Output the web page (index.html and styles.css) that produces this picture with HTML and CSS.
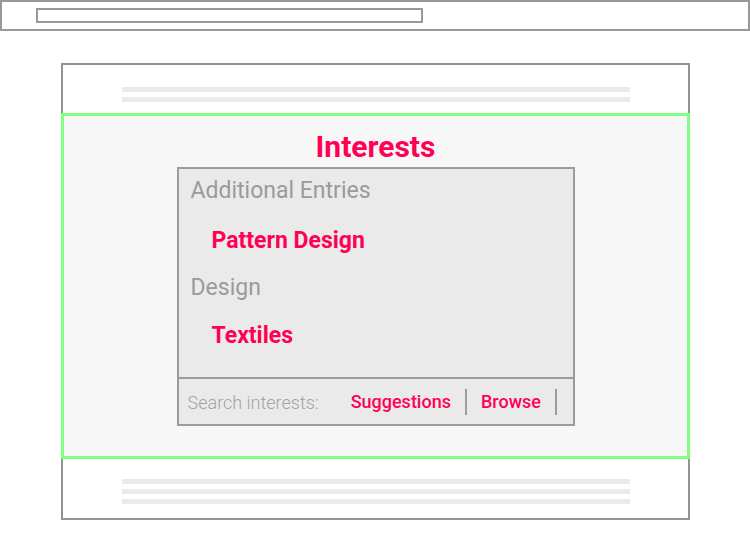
FILE: index.html
```html
<!DOCTYPE html>
<html lang="en">
<head>
<meta charset="utf-8">
<title>Interests</title>
<link rel="stylesheet" href="styles.css">
</head>
<body>
  <header class="topbar">
    <div class="topbar-field"></div>
  </header>

  <main class="page">
    <section class="page-head">
      <div class="placeholder-line"></div>
      <div class="placeholder-line"></div>
    </section>

    <section class="focus">
      <h1 class="focus-title">Interests</h1>
      <div class="panel">
        <ul class="entries">
          <li class="entry entry-group">Additional Entries</li>
          <li class="entry entry-item">Pattern Design</li>
          <li class="entry entry-group">Design</li>
          <li class="entry entry-item">Textiles</li>
        </ul>
        <div class="panel-footer">
          <span class="search-label">Search interests:</span>
          <a class="search-link">Suggestions</a>
          <a class="search-link">Browse</a>
        </div>
      </div>
    </section>

    <section class="page-foot">
      <div class="placeholder-line"></div>
      <div class="placeholder-line"></div>
      <div class="placeholder-line"></div>
    </section>
  </main>
</body>
</html>
```

FILE: styles.css
```css
* {
  box-sizing: border-box;
}

html, body {
  margin: 0;
  padding: 0;
  background: #ffffff;
}

body {
  width: 750px;
  height: 550px;
  overflow: hidden;
  font-family: Roboto, "Liberation Sans", sans-serif;
}

.topbar {
  height: 31px;
  border: 2px solid #999999;
  padding: 6px 0 0 34px;
}

.topbar-field {
  width: 387px;
  height: 15px;
  border: 2px solid #999999;
}

.page {
  margin: 32px 0 0 61px;
  width: 629px;
  height: 457px;
  border: 2px solid #939393;
  display: flex;
  flex-direction: column;
}

.placeholder-line {
  width: 508px;
  height: 5px;
  background: #ebebeb;
  margin: 0 auto;
}

.page-head {
  height: 48px;
  padding-top: 22px;
  display: flex;
  flex-direction: column;
  gap: 5px;
}

.page-foot {
  flex: 1;
  padding-top: 20px;
  display: flex;
  flex-direction: column;
  gap: 5px;
}

.focus {
  height: 346px;
  margin: 0 -2px;
  border: 3px solid #80ff80;
  background: #f7f7f7;
  display: flex;
  flex-direction: column;
  align-items: center;
}

.focus-title {
  margin: 0;
  padding-top: 10px;
  height: 51px;
  line-height: 41px;
  font-size: 30px;
  font-weight: 700;
  color: #ff0055;
}

.panel {
  width: 398px;
  height: 259px;
  border: 2px solid #9c9c9c;
  background: #eaeaea;
  display: flex;
  flex-direction: column;
}

.entries {
  list-style: none;
  margin: 0;
  padding: 0;
  height: 208px;
  display: flex;
  flex-direction: column;
}

.entry {
  line-height: 44px;
  height: 44px;
  font-size: 23px;
  white-space: nowrap;
}

.entry-group {
  padding-left: 12px;
  color: #9a9a9a;
  font-weight: 400;
}

.entry-item {
  margin-top: 6px;
  padding-left: 33px;
  color: #ff0055;
  font-weight: 700;
}

.entry-item + .entry-group {
  margin-top: 3px;
}

.entry-group + .entry-item:last-child {
  margin-top: 4px;
}

.panel-footer {
  flex: 1;
  border-top: 2px solid #9c9c9c;
  display: flex;
  align-items: center;
  padding: 1px 0 0 9px;
  font-size: 18px;
  white-space: nowrap;
}

.search-label {
  flex-shrink: 0;
  color: #a3a3a3;
  font-weight: 300;
  margin-right: 18px;
}

.search-link {
  flex-shrink: 0;
  color: #ff0055;
  font-weight: 500;
  padding: 0 14px;
  line-height: 26px;
  border-right: 2px solid #9c9c9c;
}
```
